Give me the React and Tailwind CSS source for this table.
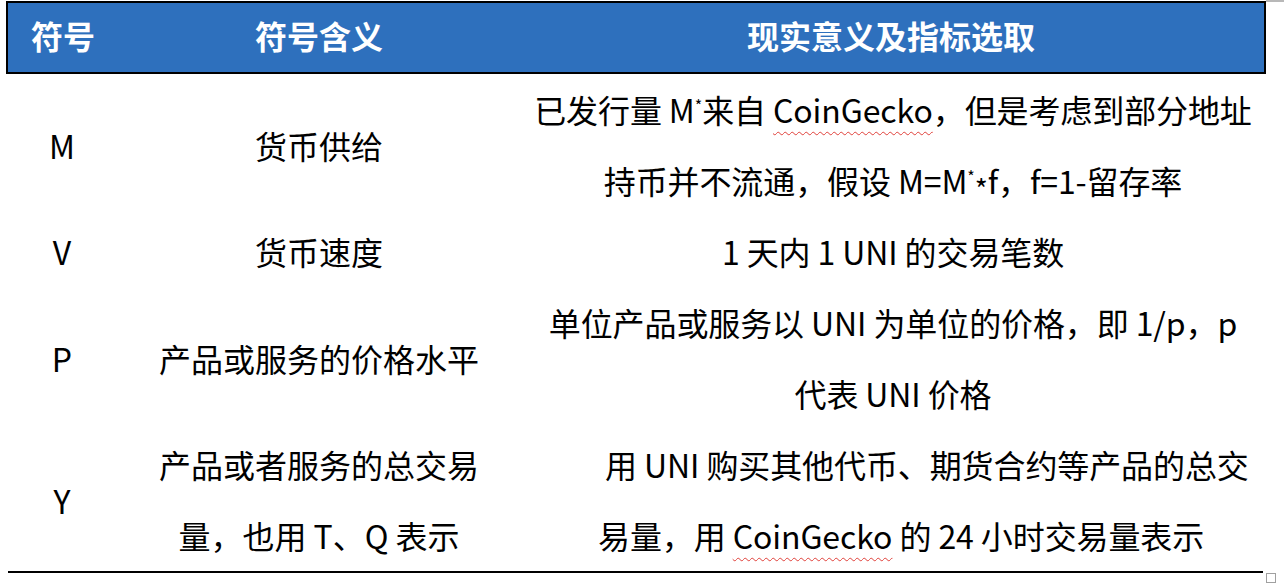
import React from "react";

const font = "font-['Noto_Sans_CJK_SC','Noto_Sans',sans-serif]";

// red squiggle the way a spell checker marks a word
const Squiggle = ({ children }) => (
    <span className="underline decoration-wavy decoration-[#e0403a] decoration-1 underline-offset-[8px]">
        {children}
    </span>
);

const Star = () => <span className="relative -top-[11px] text-[16px] leading-none">*</span>;
const Times = () => <span className="relative top-[6px] text-[28px] leading-none">*</span>;

const rows = [
    {
        sym: "M",
        lines: 2,
        meaning: ["货币供给"],
        detail: [
            <>已发行量 M<Star />来自 <Squiggle>CoinGecko</Squiggle>，但是考虑到部分地址</>,
            <>持币并不流通，假设 M=M<Star /><Times />f，f=1-留存率</>,
        ],
    },
    {
        sym: "V",
        lines: 1,
        meaning: ["货币速度"],
        detail: ["1 天内 1 UNI 的交易笔数"],
    },
    {
        sym: "P",
        lines: 2,
        meaning: ["产品或服务的价格水平"],
        detail: ["单位产品或服务以 UNI 为单位的价格，即 1/p，p", "代表 UNI 价格"],
    },
    {
        sym: "Y",
        lines: 2,
        meaning: ["产品或者服务的总交易", "量，也用 T、Q 表示"],
        detail: [
            "\u00a0用 UNI 购买其他代币、期货合约等产品的总交",
            <>易量，用 <Squiggle>CoinGecko</Squiggle> 的 24 小时交易量表示</>,
        ],
        left: true,
    },
];

const App = () => {
    return (
        <div className={`w-[1284px] h-[584px] bg-white text-black ${font} pl-[6px] pt-[1px] flex`}>
            <div className="w-[1260px] flex flex-col">
                {/* header */}
                <div className="grid grid-cols-[110px_402px_1fr] h-[73px] border-2 border-black bg-[#2e70bd] text-white font-bold text-[32px] leading-none items-center">
                    <div className="text-center pb-[5px]">符号</div>
                    <div className="text-center pb-[5px]">符号含义</div>
                    <div className="text-center pb-[5px] pr-[2px]">现实意义及指标选取</div>
                </div>

                {/* body */}
                <div className="flex flex-col text-[32px] leading-[71px] whitespace-nowrap">
                    {rows.map((r) => (
                        <div
                            key={r.sym}
                            className={`grid grid-cols-[112px_402px_1fr] items-center ${r.lines === 2 ? "h-[142px]" : "h-[71px]"}`}
                        >
                            <div className="text-center pb-[7px]">{r.sym}</div>
                            <div className="text-center pb-[7px]">
                                {r.meaning.map((m, i) => (
                                    <div key={i}>{m}</div>
                                ))}
                            </div>
                            <div className={`pb-[7px] tracking-[-0.1px] ${r.left ? "text-left pl-[78px]" : "text-center"}`}>
                                {r.detail.map((d, i) => (
                                    <div key={i}>{d}</div>
                                ))}
                            </div>
                        </div>
                    ))}
                </div>
                <div className="h-[2px] bg-black ml-[2px] mr-[3px]" />
            </div>

            {/* end-of-row markers */}
            <div className="w-[18px] flex flex-col">
                <div className="h-[2px] bg-[#b8b8b8] -mt-[1px]" />
                <div className="flex-1" />
                <div className="w-[10px] h-[10px] border border-[#a0a0a0] mb-[1px]" />
            </div>
        </div>
    );
};

export default App;
